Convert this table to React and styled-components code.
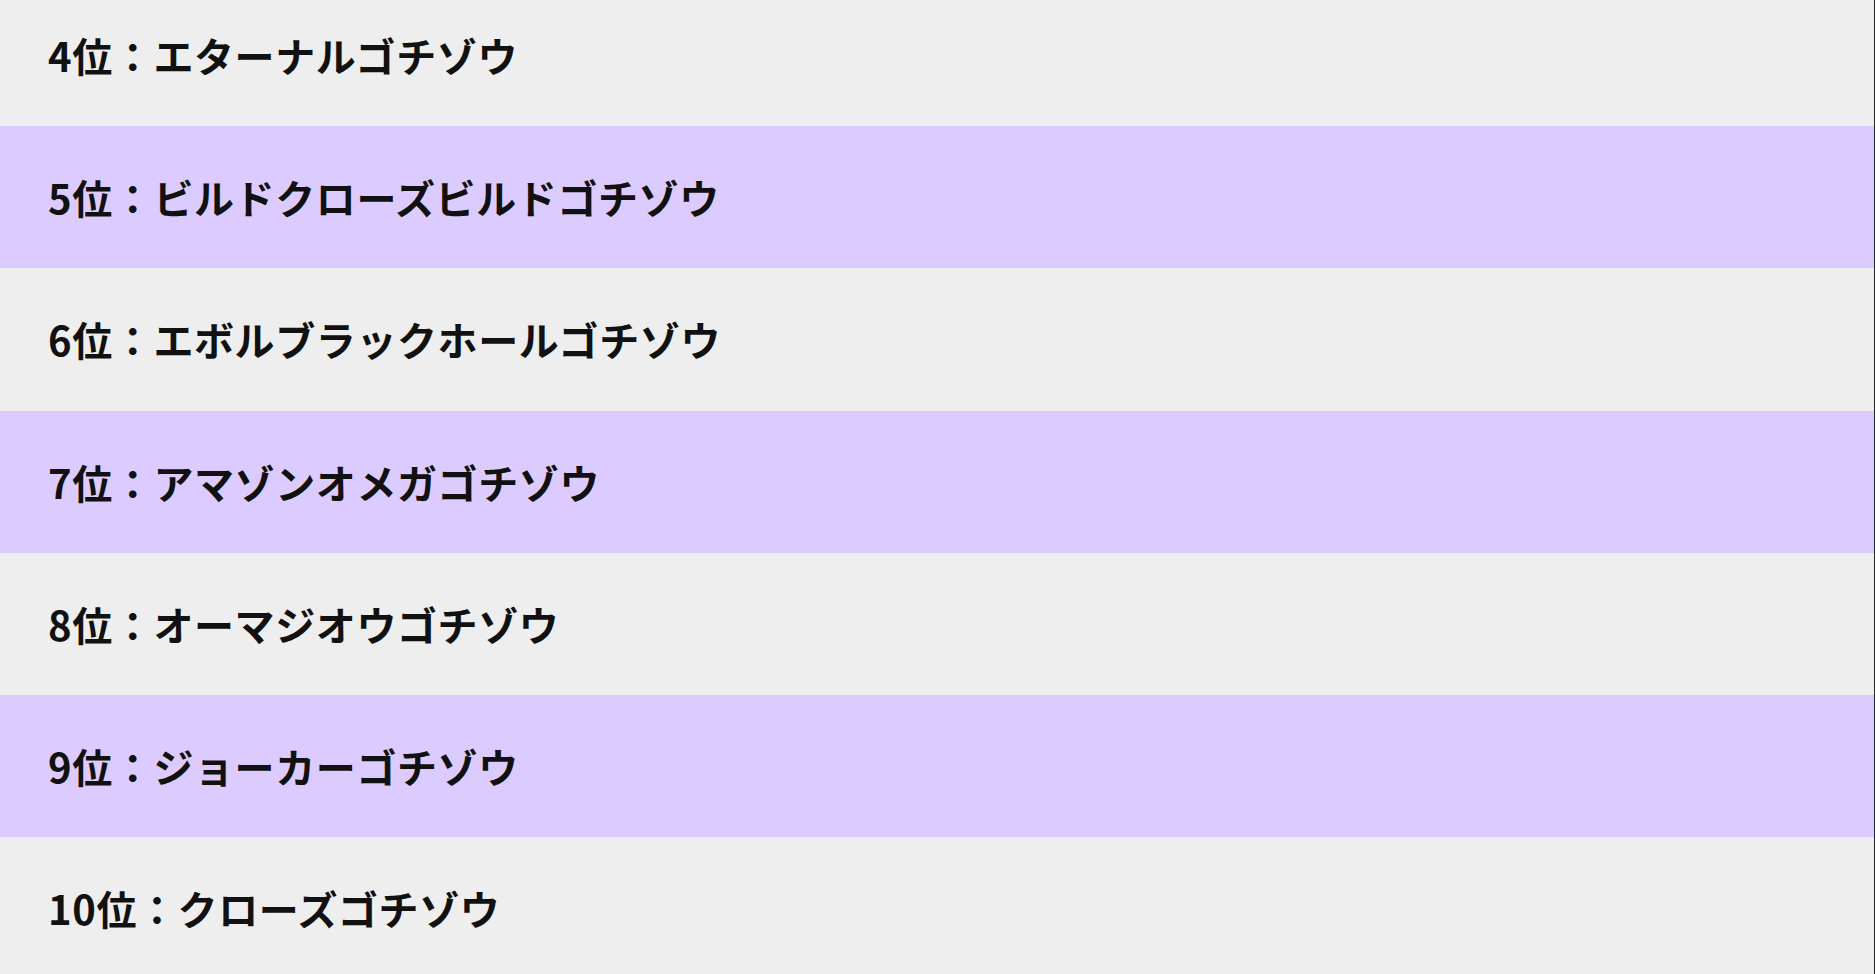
import React from 'react'
import styled, { createGlobalStyle } from 'styled-components'

const GlobalStyle = createGlobalStyle`
  html, body {
    margin: 0;
    padding: 0;
    background: #eeeeee;
    overflow: hidden;
  }
  body {
    font-family: "Noto Sans CJK JP", "Noto Sans", sans-serif;
  }
`

const Page = styled.div`
  height: 100vh;
  overflow: hidden;
  border-right: 1px solid #2a2a2a;
  box-sizing: border-box;
`

const RankList = styled.ul`
  list-style: none;
  margin: -16px 0 0;
  padding: 0;
`

const RankRow = styled.li`
  display: flex;
  align-items: center;
  height: 142.2px;
  padding: 0 0 0 48px;
  background: ${(p) => (p.$odd ? '#dccbff' : '#eeeeee')};
  font-size: 40px;
  letter-spacing: 0.6px;
  font-weight: 700;
  color: #111111;
  white-space: nowrap;
`

const ranks = [
  { rank: 4, name: 'エターナルゴチゾウ' },
  { rank: 5, name: 'ビルドクローズビルドゴチゾウ' },
  { rank: 6, name: 'エボルブラックホールゴチゾウ' },
  { rank: 7, name: 'アマゾンオメガゴチゾウ' },
  { rank: 8, name: 'オーマジオウゴチゾウ' },
  { rank: 9, name: 'ジョーカーゴチゾウ' },
  { rank: 10, name: 'クローズゴチゾウ' },
]

const App = () => {
  return (
    <Page>
      <GlobalStyle />
      <RankList>
        {ranks.map((r) => (
          <RankRow key={r.rank} $odd={r.rank % 2 === 1}>
            {r.rank}位：{r.name}
          </RankRow>
        ))}
      </RankList>
    </Page>
  )
}

export default App
